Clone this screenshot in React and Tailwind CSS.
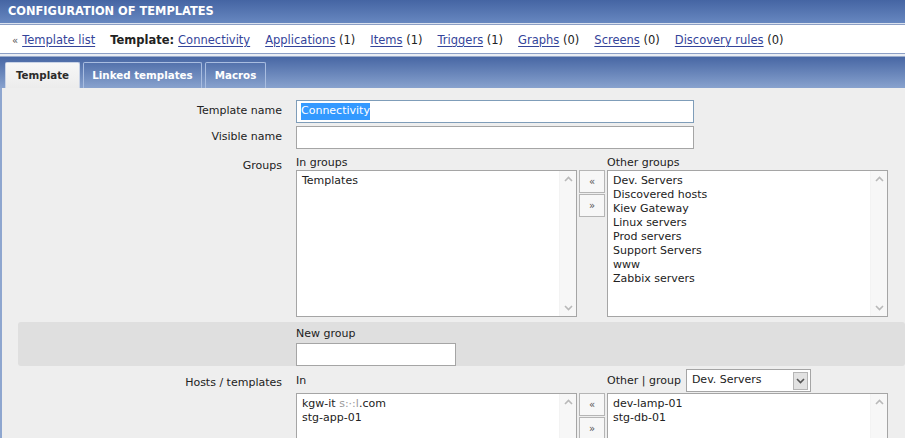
import React from 'react';

const font = { fontFamily: '"DejaVu Sans", Verdana, sans-serif' };

function Up() {
  return (
    <svg width="9" height="6" viewBox="0 0 9 6" className="block">
      <path d="M1 5 L4.5 1.5 L8 5" fill="none" stroke="#b9b9b9" strokeWidth="1.6" />
    </svg>
  );
}

function Down({ color = '#b9b9b9' }) {
  return (
    <svg width="9" height="6" viewBox="0 0 9 6" className="block">
      <path d="M1 1 L4.5 4.5 L8 1" fill="none" stroke={color} strokeWidth="1.6" />
    </svg>
  );
}

function ListBox({ items }) {
  return (
    <div className="flex h-[147px] w-[281px] border border-[#a5a5a5] bg-white">
      <div className="flex-1 pl-[5px] pt-[3px] leading-[14px] text-[#222]">
        {items.map((it, i) => (
          <div key={i}>{it}</div>
        ))}
      </div>
      <div className="flex w-[17px] flex-col items-center justify-between border-l border-[#f3f3f3] bg-[#f7f7f7] py-[5px]">
        <Up />
        <Down />
      </div>
    </div>
  );
}

function MoveButtons() {
  return (
    <div className="flex flex-col gap-[1px]">
      <button className="flex h-[23px] w-[26px] items-center justify-center border border-[#b5b5b5] bg-[#f7f7f7] text-[10px] text-[#555]">«</button>
      <button className="flex h-[23px] w-[26px] items-center justify-center border border-[#b5b5b5] bg-[#f7f7f7] text-[10px] text-[#555]">»</button>
    </div>
  );
}

function Link({ children }) {
  return <span className="text-[#34449a] underline underline-offset-2">{children}</span>;
}

export default function App() {
  const nav = [
    ['Applications', '(1)'],
    ['Items', '(1)'],
    ['Triggers', '(1)'],
    ['Graphs', '(0)'],
    ['Screens', '(0)'],
    ['Discovery rules', '(0)'],
  ];

  return (
    <div className="h-[438px] w-[905px] overflow-hidden bg-[#eeeeee] text-[11px] text-[#222]" style={font}>
      {/* Title bar */}
      <div className="flex h-[23px] items-center bg-gradient-to-b from-[#4565a3] to-[#6787c0] pl-[8px] pt-[1px] text-[11.4px] font-bold text-white">
        CONFIGURATION OF TEMPLATES
      </div>
      <div className="h-[1px] bg-[#dbe2ee]" />

      {/* Navigation strip */}
      <div className="flex h-[30px] items-center border-y border-[#8c9fc5] bg-white pl-[12px] pt-[3px] text-[11.5px]">
        <span className="mr-[4px] text-[10px] text-[#555]">«</span>
        <Link>Template list</Link>
        <span className="ml-[15px] font-bold">Template:</span>
        <span className="ml-[4px]"><Link>Connectivity</Link></span>
        {nav.map(([name, count]) => (
          <span key={name} className="ml-[15px]">
            <Link>{name}</Link> {count}
          </span>
        ))}
      </div>
      <div className="h-[2px] bg-[#e9edf3]" />
      <div className="h-[1px] bg-[#9aabcb]" />

      {/* Tabs */}
      <div className="flex h-[31px] items-end gap-[3px] bg-gradient-to-b from-[#4867a4] to-[#88a2ce] pl-[5px] text-[10.3px] font-bold">
        <div className="flex h-[26px] w-[75px] items-center justify-center rounded-t-[2px] border border-b-0 border-[#c9d3e6] bg-gradient-to-b from-[#f7f7f7] to-[#ececec] text-[#2b2b2b]">
          Template
        </div>
        <div className="flex h-[26px] w-[119px] items-center justify-center rounded-t-[2px] border border-b-0 border-[#a9bde0] text-white">
          Linked templates
        </div>
        <div className="flex h-[26px] w-[61px] items-center justify-center rounded-t-[2px] border border-b-0 border-[#a9bde0] text-white">
          Macros
        </div>
      </div>

      {/* Form */}
      <div className="h-full border-l-2 border-[#8ea6cf] pt-[12px]">
        {/* Template name */}
        <div className="flex items-center">
          <div className="w-[294px] pr-[14px] text-right">Template name</div>
          <div className="flex h-[23px] w-[398px] items-center border border-[#7f9db9] bg-white pl-[4px]">
            <span className="bg-[#3399ff] text-white">Connectivity</span>
          </div>
        </div>

        {/* Visible name */}
        <div className="mt-[3px] flex items-center">
          <div className="w-[294px] pr-[14px] text-right">Visible name</div>
          <div className="h-[23px] w-[398px] border border-[#a5a5a5] bg-white" />
        </div>

        {/* Groups */}
        <div className="mt-[6px] flex">
          <div className="w-[294px] pr-[14px] pt-[3px] text-right">Groups</div>
          <div>
            <div className="flex">
              <div className="w-[311px] pt-[1px] leading-[14px]">In groups</div>
              <div className="pt-[1px] leading-[14px]">Other groups</div>
            </div>
            <div className="flex gap-[2px]">
              <ListBox items={['Templates']} />
              <MoveButtons />
              <ListBox
                items={[
                  'Dev. Servers',
                  'Discovered hosts',
                  'Kiev Gateway',
                  'Linux servers',
                  'Prod servers',
                  'Support Servers',
                  'www',
                  'Zabbix servers',
                ]}
              />
            </div>
          </div>
        </div>

        {/* New group */}
        <div className="ml-[16px] mt-[5px] flex h-[44px] items-start rounded-[3px] bg-[#dfdfdf]">
          <div className="w-[278px]" />
          <div className="pt-[5px]">
            <div className="leading-[14px]">New group</div>
            <div className="mt-[2px] h-[23px] w-[160px] border border-[#a5a5a5] bg-white" />
          </div>
        </div>

        {/* Hosts / templates */}
        <div className="mt-[3px] flex">
          <div className="w-[294px] pr-[14px] pt-[6px] text-right">Hosts / templates</div>
          <div>
            <div className="flex h-[23px] items-center">
              <div className="w-[311px] pt-[2px]">In</div>
              <div className="pt-[2px]">Other | group</div>
              <div className="ml-[5px] flex h-[23px] w-[125px] items-center justify-between border border-[#a5a5a5] bg-white pl-[5px] pr-[2px]">
                <span>Dev. Servers</span>
                <div className="flex h-[18px] w-[15px] items-center justify-center border border-[#b5b5b5] bg-[#e2e2e2]">
                  <Down color="#555" />
                </div>
              </div>
            </div>
            <div className="mt-[1px] flex gap-[2px]">
              <ListBox
                items={[
                  <span>
                    kgw-it <span className="text-[#9a9a9a]">s:·:l</span>.com
                  </span>,
                  'stg-app-01',
                ]}
              />
              <MoveButtons />
              <ListBox items={['dev-lamp-01', 'stg-db-01']} />
            </div>
          </div>
        </div>
      </div>
    </div>
  );
}
